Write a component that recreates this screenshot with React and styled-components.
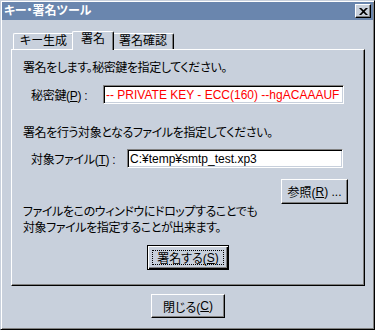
import React from 'react';
import styled, { createGlobalStyle } from 'styled-components';

const GlobalStyle = createGlobalStyle`
    html, body {
        margin: 0;
        padding: 0;
        background: #c8d0dc;
    }
    body {
        font-family: "Liberation Sans", "Noto Sans CJK JP", sans-serif;
        font-size: 12px;
        color: #000;
    }
`;

const FACE = '#c8d0dc';

const Window = styled.div`
    width: 375px;
    height: 330px;
    box-sizing: border-box;
    background: ${FACE};
    border: 1px solid;
    border-color: ${FACE} #000 #000 ${FACE};
    box-shadow: inset 1px 1px #fff, inset -1px -1px #808080;
    padding: 1px;
    display: flex;
    flex-direction: column;
`;

const TitleBar = styled.div`
    height: 18px;
    background: #6a86ae;
    display: flex;
    align-items: center;
    justify-content: space-between;
    padding: 0 2px 0 2px;
`;

const Title = styled.span`
    color: #fff;
    font-weight: bold;
    font-size: 12px;
    font-feature-settings: "palt";
    line-height: 18px;
`;

const CloseBox = styled.button`
    width: 16px;
    height: 14px;
    padding: 0;
    margin: 0;
    background: ${FACE};
    border: 1px solid;
    border-color: #fff #000 #000 #fff;
    box-shadow: inset -1px -1px #808080;
    display: flex;
    align-items: center;
    justify-content: center;
`;

const Body = styled.div`
    flex: 1;
    padding: 11px 8px 0 9px;
    display: flex;
    flex-direction: column;
    align-items: stretch;
`;

const TabRow = styled.div`
    display: flex;
    align-items: flex-end;
    padding-left: 2px;
    height: 18px;
    position: relative;
    z-index: 1;
`;

const Tab = styled.div`
    box-sizing: border-box;
    height: ${p => (p.$active ? '19px' : '16px')};
    margin: ${p => (p.$active ? '0 -2px -1px -2px' : '0')};
    padding: ${p => (p.$active ? '0 8px' : '0 6px')};
    background: ${FACE};
    border-top: 1px solid #fff;
    border-left: 1px solid #fff;
    border-right: 1px solid #000;
    box-shadow: inset -1px 0 #808080;
    border-radius: 2px 2px 0 0;
    line-height: 15px;
    font-feature-settings: "palt";
    position: relative;
    z-index: ${p => (p.$active ? 2 : 1)};
`;

const Panel = styled.div`
    height: 237px;
    box-sizing: border-box;
    border: 1px solid;
    border-color: #fff #000 #000 #fff;
    box-shadow: inset -1px -1px #808080;
    padding: 12px 11px 0 11px;
    display: flex;
    flex-direction: column;
`;

const Text = styled.div`
    line-height: ${p => p.$lh || 12}px;
    margin-top: ${p => p.$mt || 0}px;
    font-feature-settings: "palt";
    letter-spacing: -0.4px;
    white-space: nowrap;
`;

const Row = styled.div`
    display: flex;
    align-items: center;
    padding-left: 8px;
    margin-top: ${p => p.$mt}px;
    height: 19px;
`;

const Label = styled.label`
    width: ${p => p.$w}px;
    flex: none;
    font-feature-settings: "palt";
    letter-spacing: -0.3px;
    white-space: nowrap;
`;

const Field = styled.input`
    box-sizing: border-box;
    width: ${p => p.$w}px;
    height: 19px;
    margin: 0;
    padding: 0 2px;
    background: #fff;
    border: 1px solid;
    border-color: #808080 #fff #fff #808080;
    box-shadow: inset 1px 1px #000, inset -1px -1px ${FACE};
    font-family: "Liberation Sans", "Noto Sans CJK JP", sans-serif;
    font-size: 12px;
    color: ${p => p.$color || '#000'};
    outline: none;
`;

const ButtonRow = styled.div`
    display: flex;
    justify-content: ${p => p.$align || 'center'};
    margin-top: ${p => p.$mt || 0}px;
    padding-right: ${p => p.$pr || 0}px;
`;

const Button = styled.button`
    box-sizing: border-box;
    width: ${p => p.$w}px;
    height: ${p => p.$h}px;
    margin: 0;
    padding: 0;
    background: ${FACE};
    font-family: "Liberation Sans", "Noto Sans CJK JP", sans-serif;
    font-size: 12px;
    font-feature-settings: "palt";
    color: #000;
    border: 1px solid;
    border-color: ${p => (p.$default ? '#000' : '#fff #000 #000 #fff')};
    box-shadow: ${p =>
        p.$default
            ? 'inset 1px 1px #fff, inset -1px -1px #000, inset -2px -2px #808080'
            : 'inset -1px -1px #808080'};
    display: flex;
    align-items: center;
    justify-content: center;
`;

const Focus = styled.span`
    display: flex;
    align-items: center;
    justify-content: center;
    width: calc(100% - 8px);
    height: calc(100% - 8px);
    border: 1px dotted #000;
    box-sizing: border-box;
`;

const Footer = styled.div`
    display: flex;
    justify-content: center;
    margin-top: 8px;
`;

const CloseIcon = () => (
    <svg width="9" height="7" viewBox="0 0 9 7">
        <path d="M0 0h2.2l2.3 2.3L6.8 0H9L5.6 3.5 9 7H6.8L4.5 4.7 2.2 7H0l3.4-3.5z" fill="#000" />
    </svg>
);

const App = () => {
    return (
        <>
            <GlobalStyle />
            <Window>
                <TitleBar>
                    <Title>キー・署名ツール</Title>
                    <CloseBox aria-label="閉じる"><CloseIcon /></CloseBox>
                </TitleBar>
                <Body>
                    <TabRow>
                        <Tab>キー生成</Tab>
                        <Tab $active>署名</Tab>
                        <Tab>署名確認</Tab>
                    </TabRow>
                    <Panel>
                        <Text>署名をします。秘密鍵を指定してください。</Text>
                        <Row $mt={11}>
                            <Label $w={72}>秘密鍵(<u>P</u>) :</Label>
                            <Field
                                $w={241}
                                $color="#ff0000"
                                readOnly
                                value="-- PRIVATE KEY - ECC(160) --hgACAAAUF"
                            />
                        </Row>
                        <Text $mt={23}>署名を行う対象となるファイルを指定してください。</Text>
                        <Row $mt={10}>
                            <Label $w={96}>対象ファイル(<u>T</u>) :</Label>
                            <Field $w={216} readOnly value="C:¥temp¥smtp_test.xp3" />
                        </Row>
                        <ButtonRow $align="flex-end" $pr={5} $mt={11}>
                            <Button $w={67} $h={25}>参照(<u>R</u>) ...</Button>
                        </ButtonRow>
                        <Text $lh={16}>ファイルをこのウィンドウにドロップすることでも</Text>
                        <Text $lh={16}>対象ファイルを指定することが出来ます。</Text>
                        <ButtonRow $mt={9}>
                            <Button $w={82} $h={25} $default>
                                <Focus>署名する(<u>S</u>)</Focus>
                            </Button>
                        </ButtonRow>
                    </Panel>
                    <Footer>
                        <Button $w={74} $h={24}>閉じる(<u>C</u>)</Button>
                    </Footer>
                </Body>
            </Window>
        </>
    );
};

export default App;
